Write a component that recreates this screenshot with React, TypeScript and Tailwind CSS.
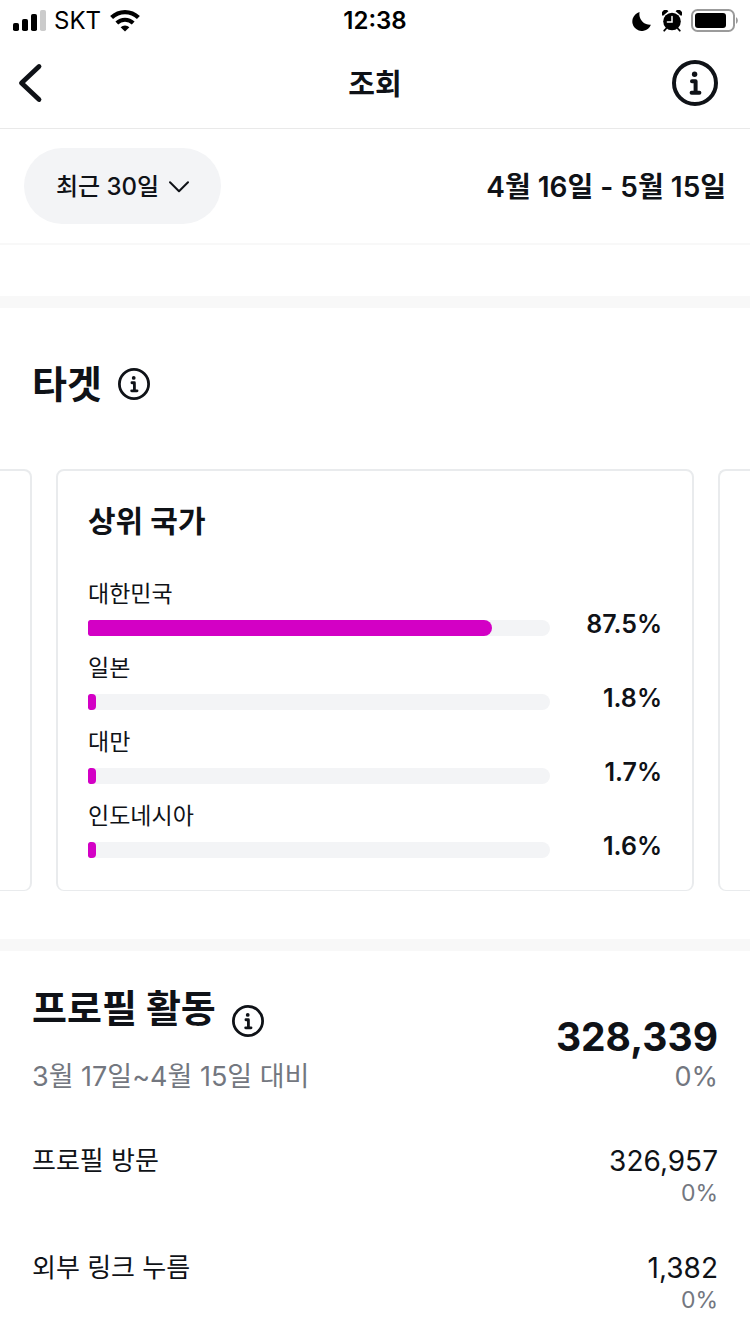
type Country = {
  name: string;
  percent: number;
};

type Activity = {
  label: string;
  value: string;
  change: string;
};

const countries: Country[] = [
  { name: "대한민국", percent: 87.5 },
  { name: "일본", percent: 1.8 },
  { name: "대만", percent: 1.7 },
  { name: "인도네시아", percent: 1.6 }
];

const activities: Activity[] = [
  { label: "프로필 방문", value: "326,957", change: "0%" },
  { label: "외부 링크 누름", value: "1,382", change: "0%" }
];

function InfoIcon({ className, stroke }: { className: string; stroke: number }) {
  return (
    <svg viewBox="0 0 46 46" fill="none" stroke="currentColor" className={className} aria-hidden="true">
      <circle cx="23" cy="23" r={23 - stroke / 2} strokeWidth={stroke} />
      <circle cx="22.6" cy="14.2" r="2.7" fill="currentColor" stroke="none" />
      <path d="M20 21.2h3.6v11.6M19.6 32.8h7.8" strokeWidth="4" strokeLinecap="round" strokeLinejoin="round" />
    </svg>
  );
}

function StatusBar() {
  return (
    <div className="grid h-10 grid-cols-3 items-center px-3 pt-0.5 text-black">
      <div className="flex items-center">
        <svg width="34" height="22" viewBox="0 0 34 22" aria-hidden="true">
          <rect x="1" y="13" width="6" height="8" rx="1.8" />
          <rect x="10" y="9" width="6" height="12" rx="1.8" />
          <rect x="19" y="4" width="6" height="17" rx="1.8" />
          <rect x="28" y="0" width="6" height="21" rx="1.8" fill="#cbcbcb" />
        </svg>
        <span className="ml-2 text-2xl leading-8">SKT</span>
        <svg className="ml-2" width="32" height="24" viewBox="0 0 32 24" fill="none" stroke="#000" aria-hidden="true">
          <path d="M2.6 8.6a19.2 19.2 0 0 1 26.8 0" strokeWidth="4.2" />
          <path d="M7.8 14a11.8 11.8 0 0 1 16.4 0" strokeWidth="4" />
          <path d="M11.6 18.2a6.4 6.4 0 0 1 8.8 0L16 22.6z" fill="#000" stroke="none" />
        </svg>
      </div>
      <span className="text-center text-2xl leading-8 font-semibold">12:38</span>
      <div className="flex items-center justify-end">
        <svg width="20" height="20" viewBox="0 0 20 20" aria-hidden="true">
          <path d="M7.6 1.1A10.6 10.6 0 0 0 18.9 13.8 9.6 9.6 0 1 1 7.600 1.100z" />
        </svg>
        <svg className="ml-2.5" width="20" height="22" viewBox="0 0 20 22" aria-hidden="true">
          <circle cx="10" cy="11.500" r="8.800" />
          <path d="M.8 6A3.400 3.400 0 0 1 6.400 1.200zM19.200 6a3.400 3.400 0 0 0-5.600-4.800z" />
          <path d="M4.200 18.500l-2 2.200M15.800 18.500l2 2.200" stroke="#000" strokeWidth="1.800" strokeLinecap="round" />
          <path d="M10 6.600v5.400H5.400" fill="none" stroke="#fff" strokeWidth="1.500" strokeLinecap="round" />
        </svg>
        <svg className="ml-2" width="48" height="24" viewBox="0 0 48 24" aria-hidden="true">
          <rect x="2" y="1" width="42" height="21" rx="5.500" fill="none" stroke="#9b9b9b" strokeWidth="2" />
          <rect x="5" y="4" width="31" height="15" rx="3" />
          <path d="M46 8.200c2.400 1.200 2.400 5.400 0 6.600z" fill="#9b9b9b" />
        </svg>
      </div>
    </div>
  );
}

function CountryRow({ name, percent }: Country) {
  return (
    <li className="flex items-end">
      <div className="flex-1">
        <p className="text-[23px] leading-8">{name}</p>
        <div className="mt-[10px] h-4 overflow-hidden rounded-l-xs rounded-r-lg bg-[#f3f4f6]">
          <div
            className={
              percent < 5
                ? "h-full min-w-2 rounded-l-xs rounded-r-sm bg-[#d300c5]"
                : "h-full rounded-l-xs rounded-r-lg bg-[#d300c5]"
            }
            style={{ width: `${percent}%` }}
          />
        </div>
      </div>
      <span className="w-28 text-right text-[25px] leading-6 font-semibold">{percent}%</span>
    </li>
  );
}

export default function App() {
  return (
    <main className="min-h-screen overflow-hidden bg-white font-['Inter','Noto_Sans_CJK_KR',sans-serif] text-[#0f1217]">
      <StatusBar />

      <header className="grid h-[89px] grid-cols-3 items-center border-b border-[#e9e9e9] pr-8 pb-0.5 pl-4">
        <button type="button" aria-label="뒤로" className="justify-self-start">
          <svg width="28" height="40" viewBox="0 0 28 40" fill="none" aria-hidden="true">
            <path d="M23 3.500L5.500 20 23 36.500" stroke="currentColor" strokeWidth="4.800" strokeLinecap="round" strokeLinejoin="round" />
          </svg>
        </button>
        <h1 className="pt-1 pl-4 text-center text-[29px] leading-10 font-bold">조회</h1>
        <button type="button" aria-label="정보" className="justify-self-end">
          <InfoIcon className="size-[46px]" stroke={4} />
        </button>
      </header>

      <div className="flex h-[116px] items-center justify-between border-b-2 border-[#f8f8f8] px-6">
        <button
          type="button"
          className="flex h-[76px] items-center gap-[10px] rounded-full bg-[#f3f4f6] px-8 pt-0.5 text-2xl leading-8 font-medium"
        >
          최근 30일
          <svg width="20" height="12" viewBox="0 0 20 12" fill="none" aria-hidden="true">
            <path d="M1 1.200l9 9 9-9" stroke="currentColor" strokeWidth="2" strokeLinecap="round" strokeLinejoin="round" />
          </svg>
        </button>
        <p className="pt-0.5 text-[28px] leading-8 font-semibold">4월 16일 - 5월 15일</p>
      </div>

      <section className="mt-[51px] border-t-12 border-[#f8f8f8] pt-[52px]">
        <div className="flex items-center gap-4 px-8">
          <h2 className="text-[38px] leading-12 font-bold">타겟</h2>
          <button type="button" aria-label="타겟 정보">
            <InfoIcon className="size-8" stroke={4} />
          </button>
        </div>

        <div className="mt-[61px] flex gap-6">
          <div className="w-8 rounded-r-lg border-2 border-b border-l-0 border-[#e9ebed]" />
          <article className="flex-1 rounded-lg border-2 border-b border-[#e9ebed] px-[30px] pt-[30px] pb-8">
            <h3 className="text-[30px] leading-10 font-bold">상위 국가</h3>
            <ul className="mt-[37px] space-y-4">
              {countries.map((country) => (
                <CountryRow key={country.name} {...country} />
              ))}
            </ul>
          </article>
          <div className="w-8 rounded-l-lg border-2 border-r-0 border-b border-[#e9ebed]" />
        </div>
      </section>

      <section className="mt-12 border-t-12 border-[#f8f8f8] px-8 pt-[33px]">
        <div className="flex items-end justify-between">
          <div>
            <div className="flex items-start gap-4">
              <h2 className="text-[38px] leading-12 font-bold">프로필 활동</h2>
              <button type="button" aria-label="프로필 활동 정보" className="mt-[21px]">
                <InfoIcon className="size-8" stroke={4} />
              </button>
            </div>
            <p className="mt-6 text-[27px] leading-8 text-[#737780]">3월 17일~4월 15일 대비</p>
          </div>
          <div className="text-right">
            <p className="text-[39px] leading-10 font-bold">328,339</p>
            <p className="mt-1 text-[27px] leading-8 text-[#737780]">0%</p>
          </div>
        </div>

        <ul className="mt-[52px] space-y-[43px]">
          {activities.map((activity) => (
            <li key={activity.label} className="flex items-start justify-between">
              <span className="text-[26px] leading-8">{activity.label}</span>
              <div className="text-right">
                <p className="text-[28px] leading-8">{activity.value}</p>
                <p className="text-[23px] leading-8 text-[#737780]">{activity.change}</p>
              </div>
            </li>
          ))}
        </ul>
      </section>
    </main>
  );
}
